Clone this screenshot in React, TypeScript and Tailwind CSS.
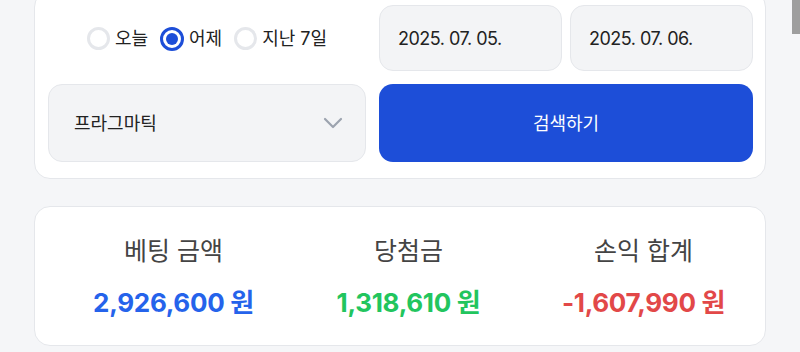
import React from "react";

const font = { fontFamily: "Inter, 'Noto Sans CJK KR', sans-serif" };

function Radio({ checked, label }: { checked?: boolean; label: string }) {
  return (
    <label className="flex items-center gap-[5px]">
      <span
        className={
          checked
            ? "w-[24px] h-[24px] rounded-full border-[3px] border-[#1d4ed8] flex items-center justify-center"
            : "w-[23px] h-[23px] rounded-full border-[3px] border-[#e5e7eb] bg-white"
        }
      >
        {checked && <span className="w-[12px] h-[12px] rounded-full bg-[#1d4ed8]" />}
      </span>
      <span className="text-[18px] text-[#222] leading-none">{label}</span>
    </label>
  );
}

export default function App() {
  return (
    <div className="relative w-[800px] h-[352px] overflow-hidden bg-[#f5f6f8]" style={font}>
      <div className="ml-[34px] w-[732px] mt-[-9px] bg-white border border-[#e5e7eb] rounded-[16px] pt-[13px] pl-[13px] pr-[12px] pb-[16px]">
        <div className="flex gap-[13px]">
          <div className="w-[318px] flex flex-col gap-[13px]">
            <div className="h-[66px] flex items-center justify-center gap-[12px] pt-[1px]">
              <Radio label="오늘" />
              <Radio checked label="어제" />
              <Radio label="지난 7일" />
            </div>
            <div className="h-[78px] rounded-[14px] bg-[#f3f4f6] border border-[#e5e7eb] flex items-center justify-between pl-[25px] pr-[22px]">
              <span className="text-[18px] text-[#222]">프라그마틱</span>
              <svg width="20" height="12" viewBox="0 0 20 12" fill="none">
                <path d="M2 2l8 8 8-8" stroke="#9ca3af" strokeWidth="2.2" strokeLinecap="round" strokeLinejoin="round" />
              </svg>
            </div>
          </div>
          <div className="w-[374px] flex flex-col gap-[13px]">
            <div className="h-[66px] flex gap-[8px]">
              <div className="w-[183px] rounded-[14px] bg-[#f3f4f6] border border-[#e5e7eb] flex items-center pl-[18px]">
                <span className="text-[18px] text-[#222] tracking-[-0.5px]">2025. 07. 05.</span>
              </div>
              <div className="w-[183px] rounded-[14px] bg-[#f3f4f6] border border-[#e5e7eb] flex items-center pl-[18px]">
                <span className="text-[18px] text-[#222] tracking-[-0.5px]">2025. 07. 06.</span>
              </div>
            </div>
            <button className="h-[78px] rounded-[14px] bg-[#1d4ed8] text-white text-[18px] flex items-center justify-center">
              검색하기
            </button>
          </div>
        </div>
      </div>
      <div className="ml-[34px] w-[732px] mt-[27px] h-[140px] bg-white border border-[#e5e7eb] rounded-[16px] grid grid-cols-3 pl-[21px] pr-[4px] pt-[26px]">
        {[
          { l: "베팅 금액", v: "2,926,600 원", c: "text-[#2563eb]" },
          { l: "당첨금", v: "1,318,610 원", c: "text-[#22c55e]" },
          { l: "손익 합계", v: "-1,607,990 원", c: "text-[#e24848]" },
        ].map((it) => (
          <div key={it.l} className="flex flex-col items-center">
            <div className="text-[25px] leading-[36px] text-[#444]">{it.l}</div>
            <div className={"text-[26px] leading-[36px] font-bold mt-[16px] tracking-[-0.3px] " + it.c}>{it.v}</div>
          </div>
        ))}
      </div>
      <div className="absolute left-[792px] top-0 z-10 w-[8px] h-[34px] bg-[#9e9e9e]" />
    </div>
  );
}
